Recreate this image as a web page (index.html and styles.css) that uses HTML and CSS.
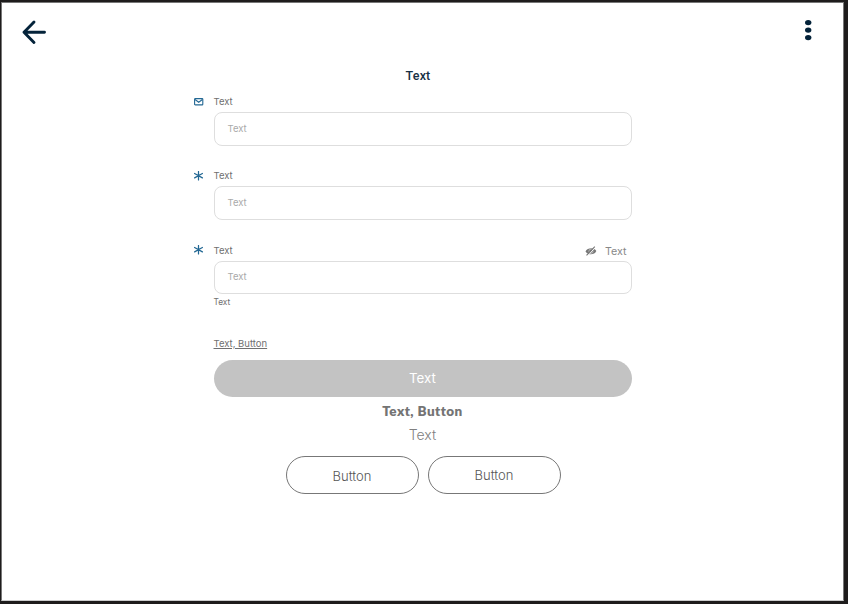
FILE: index.html
```
<!DOCTYPE html>
<html lang="en">
<head>
<meta charset="utf-8">
<title>Form</title>
<link rel="stylesheet" href="styles.css">
</head>
<body>
<div class="window">
  <header class="bar">
    <svg class="back" viewBox="0 0 26 26" width="26" height="26"><path d="M13 3 3 13.200 13 23.500M3 13.200H23.500" /></svg>
    <svg class="more" viewBox="0 0 8 22" width="8" height="22"><ellipse cx="4.200" cy="3.600" rx="3.200" ry="2.700"/><ellipse cx="4.200" cy="11.100" rx="3.200" ry="2.700"/><ellipse cx="4.200" cy="18.600" rx="3.200" ry="2.700"/></svg>
  </header>
  <main class="content">
    <h1 class="title"><span>Text</span></h1>
    <form class="form">
      <div class="field">
        <div class="head">
          <svg class="icon" viewBox="0 0 10 10" width="10" height="10"><rect x=".6" y="1.600" width="8.200" height="6.300" rx=".7"/><path d="m1 2.500 3.700 2.700 3.700-2.700"/></svg>
          <span class="label">Text</span>
        </div>
        <div class="input"><span>Text</span></div>
      </div>
      <div class="field">
        <div class="head">
          <svg class="icon star" viewBox="0 0 10 10" width="10" height="10"><path d="M4.500 .5v8.400M.6 2.500l7.800 4.400M.6 6.900l7.800-4.400"/></svg>
          <span class="label">Text</span>
        </div>
        <div class="input"><span>Text</span></div>
      </div>
      <div class="field">
        <div class="head">
          <svg class="icon star" viewBox="0 0 10 10" width="10" height="10"><path d="M4.500 .5v8.400M.6 2.500l7.800 4.400M.6 6.900l7.800-4.400"/></svg>
          <span class="label">Text</span>
          <div class="toggle">
            <svg class="eye" viewBox="0 0 12 10" width="12" height="10"><path class="lid" d="M.5 5.400C2.200 1.700 9 .8 11.300 4.900 9.800 8.900 3 9.500.5 5.400Z"/><circle cx="6" cy="5.200" r="2.100"/><path class="gap" d="M2.500 10 10.700 1"/><path class="slash" d="M1.500 9.400 9.800.7"/></svg>
            <span>Text</span>
          </div>
        </div>
        <div class="input"><span>Text</span></div>
      </div>
      <div class="hint"><span>Text</span></div>
      <a class="link"><span>Text, Button</span></a>
      <div class="submit"><span>Text</span></div>
    </form>
    <div class="strong"><span>Text, Button</span></div>
    <div class="or"><span>Text</span></div>
    <div class="actions">
      <div class="pill"><span>Button</span></div>
      <div class="pill second"><span>Button</span></div>
    </div>
  </main>
</div>
</body>
</html>
```
FILE: styles.css
```
* { box-sizing: border-box; }
body {
  margin: 0;
  height: 604px;
  padding: 2px 4px 3px 1px;
  background: #1e1c1c;
  font-family: Inter, "Liberation Sans", sans-serif;
  overflow: hidden;
}
.window {
  height: 599px;
  background: #fff;
  border: 1px solid #777;
  border-bottom-color: #ccc;
}
.bar {
  display: flex;
  justify-content: space-between;
  height: 63px;
  padding: 16px 31px 0 19px;
}
.back { fill: none; stroke: #04233a; stroke-width: 2.9; stroke-linecap: round; stroke-linejoin: round; }
.more { fill: #04233a; }
.content { display: flex; flex-direction: column; align-items: center; }
.title {
  margin: 0 0 6px;
  padding-right: 9px;
  font: 500 12.500px/20px Roboto, sans-serif;
  letter-spacing: .2px;
  color: #173044;
}
.form { width: 418px; }
.field { height: 53.500px; margin-bottom: 20.800px; }
.field:nth-child(3) { margin-bottom: 0; }
.head {
  display: flex;
  align-items: center;
  height: 20px;
  margin-left: -20px;
  padding-bottom: 1px;
  color: #707070;
}
.icon { fill: none; stroke: #236894; stroke-width: 1.1; margin-right: 10px; }
.star { stroke-width: 1.250; stroke-linecap: round; }
.label { font-size: 9.500px; font-weight: 400; }
.toggle {
  display: flex;
  align-items: center;
  gap: 8px;
  margin-left: auto;
  padding: 2px 5px 0 0;
  font-size: 10.700px;
  color: #888;
}
.lid { fill: #777; }
.eye circle { fill: none; stroke: #ddd; stroke-width: .6; }
.gap { fill: none; stroke: #fff; stroke-width: 1; }
.slash { fill: none; stroke: #777; stroke-width: 1.1; }
.input {
  display: flex;
  align-items: center;
  height: 33.500px;
  padding: 0 13px 1px;
  border: 1px solid #dedede;
  border-radius: 8px;
  font-size: 9.500px;
  color: #aaa;
}
.hint { font-size: 8.300px; line-height: 16px; color: #707070; }
.link {
  display: block;
  margin-top: 24.500px;
  font-size: 9.500px;
  line-height: 18px;
  color: #707070;
  text-decoration: underline;
}
.submit {
  display: flex;
  align-items: center;
  justify-content: center;
  height: 37.500px;
  margin-top: 7.300px;
  padding-bottom: 1px;
  border-radius: 19px;
  background: #c3c3c3;
  color: #fff;
  font-size: 13.300px;
}
.strong { font: 800 13.500px/28px Lato, sans-serif; letter-spacing: .45px; color: #747474; }
.or { font-size: 14px; font-weight: 300; line-height: 20px; color: #808080; }
.actions { display: flex; gap: 9px; margin: 11px 0 0 1px; }
.pill {
  display: flex;
  align-items: center;
  justify-content: center;
  width: 133px;
  height: 37.500px;
  padding-top: 1px;
  border: 1px solid #777;
  border-radius: 19px;
  color: #555;
  font-size: 13px;
  font-weight: 300;
}
.second { padding-top: 0; }
```
